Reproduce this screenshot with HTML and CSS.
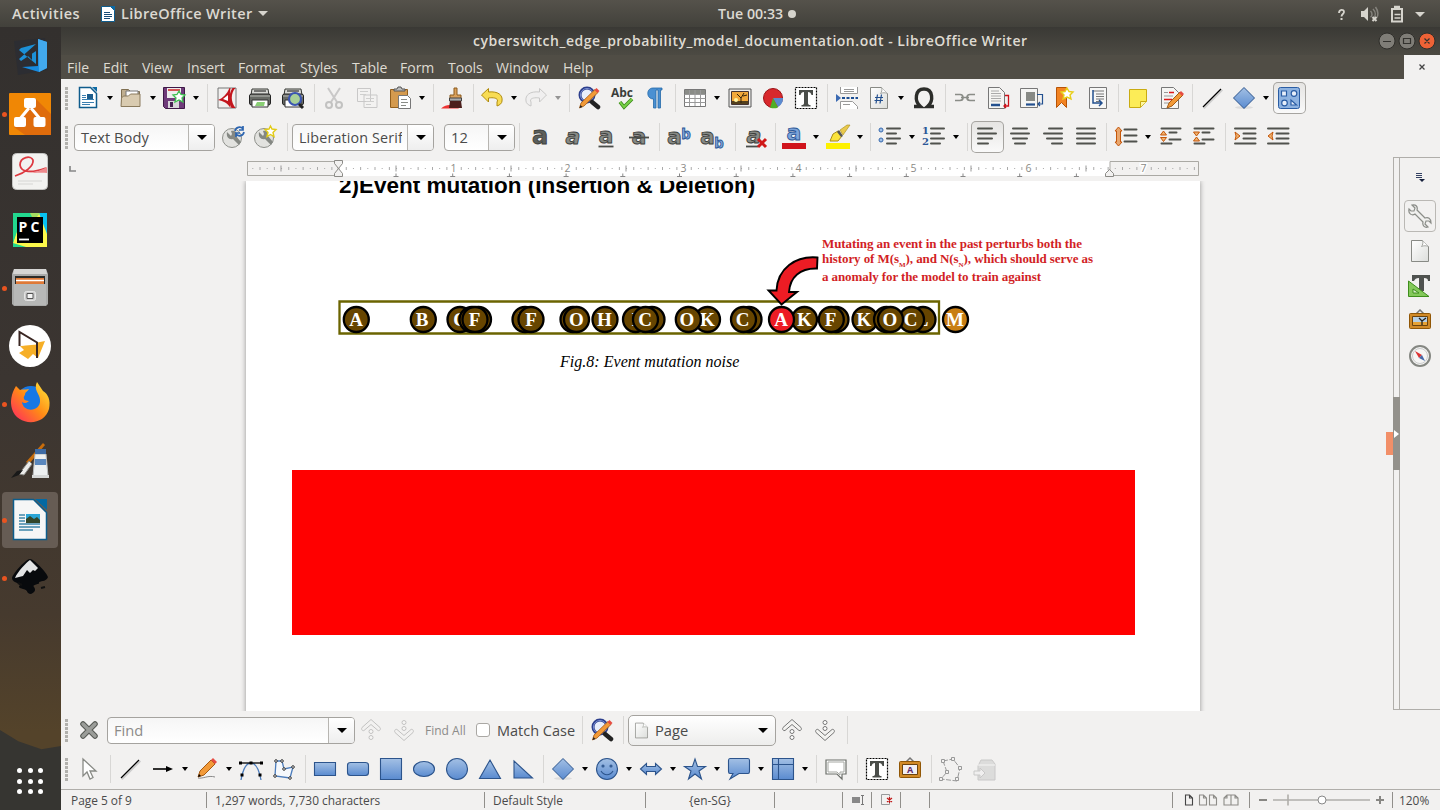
FILE: index.html
```html
<!DOCTYPE html>
<html lang="en">
<head>
<meta charset="utf-8">
<title>cyberswitch_edge_probability_model_documentation.odt - LibreOffice Writer</title>
<link rel="stylesheet" href="styles.css">
</head>
<body>
<svg class="defs" width="0" height="0">
  <defs>
    <linearGradient id="blue" x1="0" y1="0" x2="0" y2="1"><stop offset="0" stop-color="#a3c0e4"/><stop offset="1" stop-color="#5a8bd0"/></linearGradient>
    <linearGradient id="grey" x1="0" y1="0" x2="1" y2="1"><stop offset="0" stop-color="#fff"/><stop offset="1" stop-color="#dcdedb"/></linearGradient>
    <linearGradient id="fox" x1="0" y1="1" x2="1" y2="0"><stop offset="0" stop-color="#ff2166"/><stop offset=".5" stop-color="#ff8a16"/><stop offset="1" stop-color="#ffee3c"/></linearGradient>
    <symbol id="bars" viewBox="0 0 24 24"><path class="ln" d="M3 3.500H17M3 8.500H21M3 13.500H17M3 18.500H13"/></symbol>
    <symbol id="find" viewBox="0 0 24 24"><circle cx="10" cy="9" r="7" fill="#e8eefb" stroke="#2d3f8d" stroke-width="3"/><circle cx="10" cy="9" r="6.500" fill="none" stroke="#7f95d6" stroke-width="1"/><path d="M15 16l6 5" stroke="#222" stroke-width="4.500" stroke-linecap="round"/><path d="M2.500 22l1.500-5L18 3.500l3 3L7 20z" fill="#f29a38" stroke="#a45a13" stroke-width=".8"/><path d="M17.500 4l3 3 2-2-3-3z" fill="#e64c43"/><path d="M2.500 22l1-3 2 2z" fill="#222"/></symbol>
    <symbol id="line" viewBox="0 0 24 24"><path d="M4 22.500L22.500 4" stroke="#ccc" stroke-width="1.500"/><path d="M3 21L21 3" stroke="#000" stroke-width="1.300"/></symbol>
    <symbol id="diamond" viewBox="0 0 24 24"><ellipse cx="12" cy="21.500" rx="9" ry="1.500" fill="#ddd"/><path d="M12 1.500L22.500 12 12 22.500 1.500 12z" fill="url(#blue)" stroke="#2c548c"/></symbol>
    <symbol id="textbox" viewBox="0 0 24 24"><path d="M1.500 1.500h21v21h-21z" fill="#fff" stroke="#000" stroke-width="1.200" stroke-dasharray="2 1"/><path d="M5 4h14v5h-1.500c-.5-2-1.500-3-3.500-3v11c0 1.500.7 2 2.500 2v1.500h-9V19c1.800 0 2.500-.5 2.500-2V6C8 6 7 7 6.500 9H5z" fill="#4a4d49"/></symbol>
    <symbol id="page" viewBox="0 0 24 24"><path d="M3.500 1.500h11l6 6v15h-17z" fill="url(#grey)" stroke="#888a85"/><path d="M14.500 1.500c1 2 0 5-1 6 2-1 5-1 7 0" fill="#fff" stroke="#a5a7a2"/></symbol>
    <symbol id="wrench" viewBox="0 0 24 24"><circle cx="11" cy="13" r="9.500" fill="#e2e2df" stroke="#8e908b"/><path d="M6 7l4 4 1-2-1-3c5-1 6 2 5 5l5 6-2 3-6-6c-4 1-7-2-6-7z" fill="#858883"/></symbol>
    <symbol id="printer" viewBox="0 0 24 24"><path d="M4 3h16l1 6H3z" fill="#d8d9d5" stroke="#343633"/><path d="M6 5h12" stroke="#111"/><rect x="1.500" y="8" width="21" height="11" rx="2" fill="#686b66" stroke="#222"/><path d="M2 10h20" stroke="#b8bbb5"/><path d="M4 14h16v7H4z" fill="#fff" stroke="#333"/></symbol>
    <symbol id="chev-up" viewBox="0 0 24 24"><path d="M12 1.500l9 8c1 1 0 4-2 3l-7-6-7 6c-2 1-3-2-2-3z" fill="#f3f3f1" stroke="currentColor"/><circle cx="12" cy="13.500" r="2" fill="#fff" stroke="currentColor"/><circle cx="12" cy="19.500" r="2" fill="#fff" stroke="currentColor"/></symbol>
    <symbol id="chev-dn" viewBox="0 0 24 24"><path d="M12 22.500l9-8c1-1 0-4-2-3l-7 6-7-6c-2-1-3 2-2 3z" fill="#f3f3f1" stroke="currentColor"/><circle cx="12" cy="10.500" r="2" fill="#fff" stroke="currentColor"/><circle cx="12" cy="4.500" r="2" fill="#fff" stroke="currentColor"/></symbol>
    <symbol id="indent" viewBox="0 0 24 24"><path class="ln" d="M2 3.500H22.500M10.500 8.500H22.500M10.500 13.500H22.500M2 18.500H22.500"/></symbol>
  </defs>
</svg>

<header class="topbar">
  <span class="activities">Activities</span>
  <svg class="app-ico" viewBox="0 0 14 16"><path d="M.5.500h9l4 4v11H.5z" fill="#fff" stroke="#0f5c8c"/><path d="M9 0h5v5z" fill="#0b69a3"/><path d="M3 6.500h6M3 8.500h8M3 10.500h8M3 12.500h6" stroke="#174c77"/></svg>
  <span class="app-name">LibreOffice Writer</span><i class="tri"></i>
  <span class="clock">Tue 00:33</span><i class="dot"></i>
  <svg class="tray" viewBox="0 0 90 20"><g fill="none" stroke="#d6d4cd"><path d="M5 9c0-4 5-4 5-1 0 2-2.500 2-2.500 4.500" stroke-width="1.800"/><path d="M7.500 14v2" stroke-width="2"/><path d="M36.500 7c2 2 2 5 0 6M39 5c3 3 3 7 0 10M41.500 3c3 4 3 9 1 11" stroke="#85837d" stroke-width="1.500"/><path d="M38.500 13l4 4M42.500 13l-4 4" stroke-width="2"/><rect x="58" y="5" width="10" height="12.500" stroke-width="2"/><path d="M60.500 10.500h6M60.500 14h6" stroke-width="1.700"/><path d="M60 3h6" stroke-width="2.500"/></g><path d="M27 7h3l4-4v14l-4-4h-3z" fill="#d6d4cd"/><path d="M81 8h10l-5 5z" fill="#d6d4cd"/></svg>
</header>

<div class="desktop">
<nav class="dock">
  <div class="app"><svg viewBox="0 0 48 48"><path d="M8 9l31-3 3 32-30 5z" fill="#2c2d32"/><path d="M32 7l9 3v26l-8 4-17-5 16-1z" fill="#168be0"/><path d="M32 7l9 3v26l-8 4z" fill="#42a9ed"/><path d="M30 12v20L13 18l2-2zM30 12L13 27l2 2 15-10z" fill="#1c90d8"/><path d="M26 18l-5 5 5 5z" fill="#2c2d32"/></svg></div>
  <div class="app run"><svg viewBox="0 0 48 48"><rect x="3" y="3" width="42" height="42" rx="1" fill="#f08705"/><path d="M29 8l16 16v21H19L8 37z" fill="#df6c0c"/><path d="M23 18L13 30M25 18l10 12" stroke="#fff" stroke-width="3"/><rect x="18" y="8" width="12" height="10" rx="2" fill="#fff"/><rect x="8" y="27" width="12" height="10" rx="2" fill="#fff"/><rect x="27.500" y="27" width="12" height="10" rx="2" fill="#fff"/></svg></div>
  <div class="app"><svg viewBox="0 0 48 48"><rect x="6.500" y="5.500" width="35" height="36" rx="4" fill="#f2f2f0" stroke="#c5c5c3"/><path d="M9 28C19 25 28 18 27 12c-2-5-13-3-13 5 1 8 12 8 26 3" fill="none" stroke="#dd3940" stroke-width="1.800"/><path d="M20 24c8 2 15-2 21-5v6c-8-1-14 1-21-1z" fill="#ee8a8d"/><path d="M12 33h24M12 36h15" stroke="#d6d6d4"/></svg></div>
  <div class="app"><svg viewBox="0 0 48 48"><path d="M7 7h34v34H7z" fill="#22d88f"/><path d="M30 7h11v34H20L7 37l4-12z" fill="#fcf84a"/><path d="M7 37l4-12V7H7z" fill="#22d88f"/><path d="M33 7h8v21z" fill="#07c3f2"/><path d="M24 7h10l-6 8z" fill="#a3dd62"/><path d="M11 11h26v26H11z"/><text x="12.500" y="25.500" class="pc" textLength="21">PC</text><path d="M13 33.500h10" stroke="#fff" stroke-width="1.800"/></svg></div>
  <div class="app run"><svg viewBox="0 0 48 48"><path d="M8 5h32l2 5v30l-2 2H8l-2-2V10z" fill="#a9aaa9"/><path d="M8 5h32l1 5H7z" fill="#d5d5d4"/><path d="M9 12h30v8H9z" fill="#2b2b29"/><path d="M10 14h28v6H10z" fill="#df7937"/><path d="M10 16.500h28" stroke="#fff" stroke-width="1.500"/><path d="M8 20h32v21H8z" fill="#b7b8b7"/><rect x="18.500" y="27.500" width="11" height="9" rx="2" fill="#ccc" stroke="#e5e5e5"/><path d="M21 29.500h6v5h-6z" fill="#f5f5f5" stroke="#555"/></svg></div>
  <div class="app"><svg viewBox="0 0 48 48"><circle cx="24" cy="24" r="21" fill="#fff"/><path d="M14 24l25-5-7 17-5-4-5 5-9-6 5-3z" fill="#f6af27"/><path d="M13.500 23V10L31 20.500v2L14 24z" fill="#fff"/><path d="M13.500 24V10L31 20.500V36" fill="none" stroke="#3a2622" stroke-width="2"/></svg></div>
  <div class="app run"><svg viewBox="0 0 48 48"><circle cx="25" cy="21" r="15" fill="#1778e5"/><path d="M10 6c-5 8-6 16-4 23 5 17 32 18 37 0 2-9-1-15-6-18l-6-9c-4 8 3 12 3 18 1 12-17 13-18 2 2 2 5 1 7-1-6 0-6-4-4-6 0-3 2-3 4-6-4 1-7 0-9 1z" fill="url(#fox)"/></svg></div>
  <div class="app"><svg viewBox="0 0 48 48"><path d="M37 5l2 2-16 19-3-2z" fill="#c86d0c"/><path d="M23 23l3 3-8 11-5-1z" fill="#ececea" stroke="#8a8b87"/><path d="M17 32l-4 5-8 3 6-7z" fill="#191919"/><path d="M29 16h11l2 22H27z" fill="#edf0f1" stroke="#b4b7b8"/><path d="M29 11h11v5H29z" fill="#3d6ba5"/><path d="M29 21h11v6H29z" fill="#5987bd"/><path d="M26 37h17v3H26z" fill="#d5d7d7"/></svg></div>
  <div class="app run active"><svg viewBox="0 0 48 48"><path d="M7.500 3.500h20l13 13v27h-33z" fill="#f5f6f6" stroke="#0c5d8c" stroke-width="1.500"/><path d="M29 3h12v11z" fill="#0369a3"/><path d="M13 19h6M13 22h6M13 25h6M13 28h21M13 31h21M13 34h14" stroke="#3e87a9" stroke-width="1.300"/><path d="M20 18h14v9H20z" fill="#2aa5d6"/><path d="M20 27v-4l4-3 4 3 3-2 3 3v3z" fill="#33462a"/></svg></div>
  <div class="app run"><svg viewBox="0 0 48 48"><path d="M24 5c4 0 17 14 18 18-1 4-6 4-9 5 2 3-8 2-5 5 2 3 1 5-3 7-5 0-2-4-8-5-4-1-5-2-3-4-3-3-8-3-8-7C7 19 20 5 24 5z" fill="#080a0d"/><path d="M24 6l8 8-3 3-2-1-3 3-3-3-4 6-8 2c3-7 11-15 15-18z" fill="#e3e4e5"/><path d="M16 31l-4-2M35 34l4-1" stroke="#111" stroke-width="2"/></svg></div>
  <div class="grid"><i></i><i></i><i></i><i></i><i></i><i></i><i></i><i></i><i></i></div>
</nav>

<main class="window">
  <div class="titlebar"><h1>cyberswitch_edge_probability_model_documentation.odt - LibreOffice Writer</h1>
    <svg class="winbtns" viewBox="0 0 60 20"><g stroke="#2f2e2a"><circle cx="10" cy="10" r="8" fill="#7f7d77"/><circle cx="30" cy="10" r="8" fill="#7f7d77"/><circle cx="50" cy="10" r="8" fill="#ee6236"/><path d="M6 10.500h8M26.500 7.500h7v5h-7zM47.500 7.500l5 5M52.500 7.500l-5 5" fill="none" stroke="#33322e" stroke-width="1.200"/></g></svg>
  </div>
  <div class="menubar">
    <span class="m w36">File</span><span class="m w39">Edit</span><span class="m w45">View</span><span class="m w51">Insert</span><span class="m w62">Format</span><span class="m w52">Styles</span><span class="m w48">Table</span><span class="m w48">Form</span><span class="m w48">Tools</span><span class="m w67">Window</span><span class="m">Help</span>
    <span class="docclose"><svg viewBox="0 0 8 8"><path d="M1.500 1.500l5 5M6.500 1.500l-5 5" stroke="#444" stroke-width="1.300"/></svg></span>
  </div>

  <div class="toolbar"><i class="grip"></i>
    <span class="c d w43"><svg viewBox="0 0 24 24"><path d="M3.500 1.500h11l6 6v14h-17z" fill="#fff" stroke="#0f5c8c" stroke-width="1.500"/><path d="M16 1h5v5z" fill="#0b69a3"/><path d="M6 9.500h4M6 11.500h4M6 13.500h12M6 16.500h12M6 18.500h8" stroke="#3a7fb0"/><path d="M11 8h6v5h-6z" fill="#1c5d8c"/></svg></span>
    <span class="c d w43"><svg viewBox="0 0 24 24"><path d="M2.500 3.500h7l2 2h9v15h-18z" fill="#bfae8f" stroke="#7f6f51"/><path d="M7 5h12v8H7z" fill="#fff" stroke="#777"/><path d="M2.500 12l2-2h5l2-2h9.500v12.500H2z" fill="#d9cbb0" stroke="#8a7a5c"/></svg></span>
    <span class="c d w45"><svg viewBox="0 0 24 24"><path d="M1.500 1.500h21v21h-19l-2-2z" fill="#6f3b7a" stroke="#3f1947"/><path d="M5 2h14v10H5z" fill="#eee"/><path d="M6 3h12v2H6z" fill="#d75454"/><path d="M6 15h11v7H6z" fill="#d8d4da"/><path d="M8 16h3v5H8z" fill="#452050"/><path d="M17 5l2 3.500 4 .5-3 3 1 4-4-2-4 2 1-4-3-3 4-.5z" fill="#fff" stroke="#3fbf52" stroke-width="1.300"/></svg></span>
    <i class="s w8"></i>
    <span class="c w33"><svg viewBox="0 0 24 24"><path d="M3 2h18v20H3z" fill="#f1f0ef" stroke="#777"/><path d="M20.500 2c-5 5-5 14 0 20h-4c-3-6-3-14 1-20zM3 14C8 12 12 8 14.500 2h1c-1 7-1 13 0 20-3-5-7-7-12.500-8z" fill="#c3161d"/><path d="M13 9v6l-5-2z" fill="#fff"/></svg></span>
    <span class="c w33"><svg viewBox="0 0 24 24"><use href="#printer"/><path d="M7 20l2-4h8l-1 4z" fill="#89ce74"/></svg></span>
    <span class="c w33"><svg viewBox="0 0 24 24"><use href="#printer"/><circle cx="14" cy="13" r="6" fill="#a9d098" stroke="#3b56b0" stroke-width="2.200"/><path d="M18 18l4 4" stroke="#222" stroke-width="3"/></svg></span>
    <i class="s w8"></i>
    <span class="c w33 off"><svg viewBox="0 0 24 24"><path d="M6 2l9 14M18 2L9 16" stroke="#888" stroke-width="2"/><circle cx="7" cy="19" r="3" fill="none" stroke="#777" stroke-width="2"/><circle cx="17" cy="19" r="3" fill="none" stroke="#777" stroke-width="2"/></svg></span>
    <span class="c w33 off"><svg viewBox="0 0 24 24"><path d="M2.500 2.500h13v13h-13zM9 9h13v12.500H9z" fill="#f5f5f5" stroke="#888"/><path d="M5 5.500h8M5 8.500h6M11 12.500h8M11 15.500h8M11 18.500h5" stroke="#999"/></svg></span>
    <span class="c d w45"><svg viewBox="0 0 24 24"><path d="M2.500 3.500h17v18h-17z" fill="#d49a4e" stroke="#925f1d"/><path d="M6 5V3h3l1-2h3l1 2h3v2z" fill="#bbb" stroke="#555"/><path d="M10.500 9.500h9l3 3v10h-12z" fill="#fff" stroke="#777"/><path d="M13 13.500h6M13 16.500h7M13 19.500h5" stroke="#8a8c87"/></svg></span>
    <i class="s w8"></i>
    <span class="c w33"><svg viewBox="0 0 24 24"><path d="M0 22.500c6-5 9-3 14-3l4 3z" fill="#e33"/><path d="M13 2h3v7h4v4H9V9h4z" fill="#d9a05b" stroke="#8c5a1c"/><path d="M8.500 12h12v3h-12z" fill="#aaa" stroke="#444"/><path d="M9 15h11l1 7H8z" fill="#4b1f1c"/></svg></span>
    <i class="s w6"></i>
    <span class="c d w44"><svg viewBox="0 0 24 24"><path d="M1.500 9l7-6.500V6C18 5 23 9 22 15c0 2-2 4-5 5v-4c2-3-2-5-8.500-4v4z" fill="#f8dc54" stroke="#b08c10"/></svg></span>
    <span class="c d w45 off"><svg viewBox="0 0 24 24"><path d="M22.500 9l-7-6.500V6C6 5 1 9 2 15c0 2 2 4 5 5v-4c-2-3 2-5 8.500-4v4z" fill="#eee" stroke="#888"/></svg></span>
    <i class="s w8"></i>
    <span class="c w33"><svg><use href="#find"/></svg></span>
    <span class="c w33"><svg viewBox="0 0 24 24"><text x="1" y="10.500" class="abc" textLength="22" lengthAdjust="spacingAndGlyphs">Abc</text><path d="M10 16l4 5 8-8" fill="none" stroke="#3d8b1c" stroke-width="3.600"/><path d="M10 16l4 5 8-8" fill="none" stroke="#77cf46" stroke-width="2"/></svg></span>
    <span class="c w33"><svg viewBox="0 0 24 24"><path d="M10 2h9v2h-1.500v18H15V4h-2v18h-2.500V13C3 13 3 2 10 2z" fill="#4a90d2" stroke="#256aa8" stroke-width=".8"/></svg></span>
    <i class="s w7"></i>
    <span class="c d w45"><svg viewBox="0 0 24 24"><path d="M1.500 3.500h21v17h-21z" fill="#fff" stroke="#777"/><path d="M2 4h20v4H2z" fill="#8a8c87"/><path d="M1.500 8.500h21M1.500 12.500h21M1.500 16.500h21M6.500 4v16M12 4v16M17.500 4v16" stroke="#999"/></svg></span>
    <span class="c w33"><svg viewBox="0 0 24 24"><path d="M1 3h22v18H1z" fill="#eeeeec" stroke="#555"/><path d="M3.500 5.500h17v13h-17z" fill="#f1a83b" stroke="#433"/><path d="M4 15h16v3H4z" fill="#54401c"/><path d="M13 17v-5l-4-4m4 4l3-5m-1 3l4-1" stroke="#30200a" fill="none" stroke-width="1"/><circle cx="8" cy="14" r="2" fill="#fff3a0"/></svg></span>
    <span class="c w33"><svg viewBox="0 0 24 24"><circle cx="12" cy="12" r="9.500" fill="#d8282c" stroke="#9c1116"/><path d="M12 12h10a10 10 0 0 1-5 9z" fill="#5b8bd0"/><path d="M12 12l5 9.500a10 10 0 0 1-8 0z" fill="#4fae26"/></svg></span>
    <span class="c w33"><svg><use href="#textbox"/></svg></span>
    <i class="s w8"></i>
    <span class="c w32"><svg viewBox="0 0 24 24"><path d="M5.500 1v6.500h17V1M5.500 23v-7.500h12l5 5V23" fill="#fff" stroke="#999"/><path d="M9 3.500h10M9 5.500h10M8 18.500h7" stroke="#999"/><path d="M1 8l5 4-5 4z" fill="#3b6ab2"/><path d="M7 12h16" stroke="#1d4f93" stroke-width="2" stroke-dasharray="3 1.500"/></svg></span>
    <span class="c d w45"><svg viewBox="0 0 24 24"><use href="#page"/><path d="M10.500 8.500l-1.500 9M14.500 8.500L13 17.500M8 11.500H16M7.500 14.500h8.500" stroke="#23508f" stroke-width="1.200"/></svg></span>
    <span class="c w33"><svg viewBox="0 0 24 24"><path d="M2 20.500h6.500C2 15 3 3 12 3s10 12 3.500 17.500H22" fill="none" stroke="#2c2d2a" stroke-width="3.400"/></svg></span>
    <i class="s w8"></i>
    <span class="c w33"><svg viewBox="0 0 24 24"><path d="M2 8.500h5c4 0 4 6 0 6H2M22 8.500h-5c-4 0-4 6 0 6h5M8 11.500h8" fill="none" stroke="#8a8d87" stroke-width="1.700"/></svg></span>
    <span class="c w33"><svg viewBox="0 0 24 24"><path d="M2.500 1.500h11l5 5v16h-16z" fill="#f5f5f3" stroke="#777"/><path d="M5 5h8M5 7.500h10M5 10h10M5 12.500h10M5 15h10" stroke="#aaa"/><path d="M5 19h9" stroke="#23508f" stroke-width="2.500"/><path d="M19 9.500h3.500V20H18m2-2l-2 2 2 2" fill="none" stroke="#cc1018" stroke-width="1.300"/></svg></span>
    <span class="c w34"><svg viewBox="0 0 24 24"><path d="M1.500 2.500h17v19h-17z" fill="#f5f5f3" stroke="#777"/><path d="M7 6h9v9H7z" fill="#888a85"/><path d="M7 18.500h9" stroke="#23508f" stroke-width="2.200"/><path d="M18 8.500h5.500V18H19m2-2l-2 2 2 2" fill="none" stroke="#23508f" stroke-width="1.200"/></svg></span>
    <span class="c w33"><svg viewBox="0 0 24 24"><path d="M3.500 1.500h10v20l-5-5-5 5z" fill="#f28322" stroke="#b75306"/><path d="M14 2l2 3.500 4 .5-3 3 1 4-4-2-4 2 1-4-3-3 4-.5z" fill="#fff" stroke="#e7cd16" stroke-width="1.400"/></svg></span>
    <span class="c w32"><svg viewBox="0 0 24 24"><path d="M3.500 1.500h17v21h-17z" fill="#f7f7f6" stroke="#777"/><path d="M7 5h11M10 8h8M10 10.500h8M10 13h8M10 15.500h4" stroke="#777"/><path d="M7 4v13h8m-2-3l3 3-3 3" fill="none" stroke="#23508f" stroke-width="1.500"/></svg></span>
    <i class="s w8"></i>
    <span class="c w34"><svg viewBox="0 0 24 24"><path d="M3.500 3.500h17v12l-6 6h-11z" fill="#fcec57" stroke="#c9ab11"/><path d="M14.500 21v-5.500h6" fill="#fdf7a5" stroke="#c9ab11"/></svg></span>
    <span class="c w32"><svg viewBox="0 0 24 24"><path d="M1.500 1.500h12l5 5v16h-17z" fill="#f5f5f3" stroke="#777"/><path d="M4 6.500h4M4 10h9M4 17h6" stroke="#999"/><path d="M9 6.500h5M4 13.500h8" stroke="#dd1a1a" stroke-width="1.500"/><path d="M7 22l2-5L20 6l3 3L12 20z" fill="#f29a38" stroke="#a45a13"/><path d="M19 7l3 3 2-2-3-3z" fill="#e64c43"/></svg></span>
    <i class="s w8"></i>
    <span class="c w32"><svg><use href="#line"/></svg></span>
    <span class="c d w45"><svg><use href="#diamond"/></svg></span>
    <span class="c w33 on"><svg viewBox="0 0 24 24"><rect x="1.500" y="1.500" width="21" height="21" rx="2" fill="#8db2e0" stroke="#2a5da4"/><g fill="#e7effa" stroke="#2a5da4" stroke-width="1.200"><path d="M4.500 5h5v5h-5zM14 14v5h5.500z"/><circle cx="17" cy="7.500" r="2.800"/><circle cx="7.500" cy="17" r="2.800"/></g></svg></span>
  </div>

  <div class="toolbar"><i class="grip"></i>
    <span class="combo w141 ml2"><span>Text Body</span><b></b></span>
    <span class="c w32 ml2"><svg viewBox="0 0 24 24"><use href="#wrench"/><path d="M14 6a4.500 4.500 0 0 1 8-2m0-3v4h-4M23 7a4.500 4.500 0 0 1-8 2m0 3V8h4" fill="none" stroke="#2d65b0" stroke-width="1.700"/></svg></span>
    <span class="c w33"><svg viewBox="0 0 24 24"><use href="#wrench"/><path d="M17.500 1l1.500 3 4 .5-3 3 1 4-3.500-2-3.500 2 1-4-3-3 4-.5z" fill="#fff" stroke="#e2cb15" stroke-width="1.400"/></svg></span>
    <i class="s w10"></i>
    <span class="combo w142"><span class="name">Liberation Serif</span><b></b></span>
    <span class="combo w71 ml10"><span>12</span><b></b></span>
    <i class="s w9"></i>
    <span class="c w33"><svg viewBox="0 0 24 24"><text x="12" y="18.500" class="ga fat">a</text></svg></span>
    <span class="c w33"><svg viewBox="0 0 24 24"><text x="12" y="18.500" class="ga it">a</text></svg></span>
    <span class="c w33"><svg viewBox="0 0 24 24"><text x="12" y="18" class="ga">a</text><path d="M4.500 21.500h15" stroke="#4a4d49" stroke-width="1.800"/></svg></span>
    <span class="c w33"><svg viewBox="0 0 24 24"><text x="12" y="18.500" class="ga">a</text><path d="M2 12.500h20" stroke="#4a4d49" stroke-width="1.800"/></svg></span>
    <i class="s w7"></i>
    <span class="c w33"><svg viewBox="0 0 24 24"><text x="7.500" y="18.500" class="ga">a</text><text x="19" y="14" class="gb">b</text></svg></span>
    <span class="c w34"><svg viewBox="0 0 24 24"><text x="7.500" y="18.500" class="ga">a</text><text x="19" y="22.500" class="gb">b</text></svg></span>
    <i class="s w10"></i>
    <span class="c w32"><svg viewBox="0 0 24 24"><text x="10" y="18" class="ga it">a</text><path d="M2 21.500h12" stroke="#4a4d49" stroke-width="1.800"/><path d="M14 14l8 8M22 14l-8 8" stroke="#d01818" stroke-width="3"/></svg></span>
    <i class="s w6"></i>
    <span class="c d w44"><svg viewBox="0 0 24 24"><text x="12" y="15" class="ga bl">a</text><path d="M0 18h24v6H0z" fill="#d0141c"/></svg></span>
    <span class="c d w45"><svg viewBox="0 0 24 24"><path d="M4 16l3-7 5-3 4 5-4 5z" fill="#fbe43c" stroke="#a88d17"/><path d="M11 7l4 5 2-1-4-6z" fill="#555"/><path d="M14 5l7-5h3l-7 10z" fill="#e9c94d" stroke="#a88d17" stroke-width=".6"/><path d="M0 18h24v6H0z" fill="#fdf100"/></svg></span>
    <i class="s w7"></i>
    <span class="c d w44"><svg viewBox="0 0 24 24"><circle cx="3" cy="5" r="2" fill="#9fbfe7" stroke="#3668ad"/><circle cx="3" cy="15" r="2" fill="#9fbfe7" stroke="#3668ad"/><path d="M9 3.500h13M9 8.500h9M9 13.500h13M9 18.500h9" class="ln"/></svg></span>
    <span class="c d w45"><svg viewBox="0 0 24 24"><text x="3.500" y="9" class="num">1</text><text x="3.500" y="20" class="num">2</text><path d="M9 3.500h13M9 8.500h9M9 13.500h13M9 18.500h9" class="ln"/></svg></span>
    <i class="s w8"></i>
    <span class="c w33 on"><svg><use href="#bars"/></svg></span>
    <span class="c w33"><svg viewBox="0 0 24 24"><path d="M5 3.500h14M3 8.500h18M5 13.500h14M7 18.500h10" class="ln"/></svg></span>
    <span class="c w33"><svg viewBox="0 0 24 24"><path d="M8 3.500h13M3 8.500h18M6 13.500h15M11 18.500h10" class="ln"/></svg></span>
    <span class="c w33"><svg viewBox="0 0 24 24"><path d="M3 3.500h18M3 8.500h18M3 13.500h18M3 18.500h18" class="ln"/></svg></span>
    <i class="s w7"></i>
    <span class="c d w45"><svg viewBox="0 0 24 24"><path d="M4.500 2l3.500 4H6.500v11H8l-3.500 4L1 17h1.500V6H1z" fill="#e9a66d" stroke="#c4560a"/><path d="M10.500 4.500h12M10.500 10.500h12M10.500 16.500h12" class="ln"/></svg></span>
    <span class="c w33"><svg viewBox="0 0 24 24"><path d="M2.500 3.500h19M10.500 7.500h7M10.500 14.500h11M2.500 18.500h10" class="ln"/><path d="M1.500 10h6L4.500 6zM1.500 12.500h6l-3 4z" fill="#f1b26c" stroke="#c4560a"/></svg></span>
    <span class="c w33"><svg viewBox="0 0 24 24"><path d="M2.500 3.500h19M10.500 7.500h7M10.500 14.500h11M2.500 18.500h10" class="ln"/><path d="M1.500 7h6l-3 4zM1.500 16h6l-3-4z" fill="#f1b26c" stroke="#c4560a"/></svg></span>
    <i class="s w8"></i>
    <span class="c w33"><svg viewBox="0 0 24 24"><use href="#indent"/><path d="M2 7l5 4-5 4 1-4z" fill="#f1b26c" stroke="#c4560a"/></svg></span>
    <span class="c w33"><svg viewBox="0 0 24 24"><use href="#indent"/><path d="M7 7l-5 4 5 4-1-4z" fill="#f1b26c" stroke="#c4560a"/></svg></span>
  </div>

  <div class="workspace">
    <section class="editor">
      <svg class="ruler" viewBox="61 157 1332 24">
        <path d="M338 161h772v15H338z" fill="#fff"/>
        <path d="M247.500 161.500H338v14H247.500zM1110 161.500h88.500v14H1110z" fill="#f2f1f0" stroke="#aaa9a4"/>
        <path d="M252.300 168.500H1196" stroke="#aaa" stroke-dasharray="1 13.375"/>
        <path d="M259.500 168.500H1196" stroke="#aaa" stroke-dasharray="1 13.375" stroke-width="3"/>
        <path d="M280.500 168.500H1100" stroke="#999" stroke-dasharray="1 114" stroke-width="6"/>
        <g class="rnum"><text x="453.500" y="172">1</text><text x="567.500" y="172">2</text><text x="683.500" y="172">3</text><text x="798.500" y="172">4</text><text x="913.500" y="172">5</text><text x="1028.500" y="172">6</text><text x="1143.500" y="172">7</text></g>
        <path d="M395.500 175h690" stroke="#888" stroke-dasharray="1 55.700" stroke-width="3"/><path d="M393.500 176.500h690" stroke="#888" stroke-dasharray="5 51.700"/>
        <g fill="#f2f1f0" stroke="#8b8a86"><path d="M334.500 160.500h8v3l-4 5-4-5zM334.500 176.500h8v-3l-4-5-4 5zM1105.500 176.500h8v-3l-4-4-4 4z"/></g>
        <path d="M70 166v5H76" fill="none" stroke="#888" stroke-width="1.700"/>
      </svg>
      <div class="canvas">
        <article class="sheet">
          <h2>2)Event mutation (Insertion &amp; Deletion)</h2>
          <svg class="figure" viewBox="330 230 780 120">
            <path d="M339.500 301.500h599.500v32H339.500z" fill="#fff" stroke="#6b6400" stroke-width="2.300"/>
            <g class="ev">
              <g><circle cx="356.300" cy="319.500" r="12.500"/><text x="356" y="326">A</text></g>
              <g><circle cx="423.300" cy="319.500" r="12.500"/><text x="422" y="326">B</text></g>
              <g><circle cx="460" cy="319.500" r="12.500"/><text x="460" y="326">C</text></g>
              <circle cx="472" cy="319.500" r="12.500"/><circle cx="478.500" cy="319.500" r="12.500"/>
              <g><circle cx="475" cy="319.500" r="12.500"/><text x="474.500" y="326">F</text></g>
              <g><circle cx="525" cy="319.500" r="12.500"/><text x="526" y="326">K</text></g>
              <g><circle cx="531" cy="319.500" r="12.500"/><text x="531" y="326">F</text></g>
              <circle cx="573" cy="319.500" r="12.500"/>
              <g><circle cx="576.500" cy="319.500" r="12.500"/><text x="576.500" y="326">O</text></g>
              <g><circle cx="605" cy="319.500" r="12.500"/><text x="604.500" y="326">H</text></g>
              <g><circle cx="635.500" cy="319.500" r="12.500"/><text x="638" y="326">B</text></g>
              <circle cx="652" cy="319.500" r="12.500"/>
              <g><circle cx="645.500" cy="319.500" r="12.500"/><text x="645" y="326">C</text></g>
              <g><circle cx="707.500" cy="319.500" r="12.500"/><text x="707.500" y="326">K</text></g>
              <g><circle cx="688.300" cy="319.500" r="12.500"/><text x="687" y="326">O</text></g>
              <circle cx="749" cy="319.500" r="12.500"/>
              <g><circle cx="743.500" cy="319.500" r="12.500"/><text x="742.500" y="326">C</text></g>
              <g><circle cx="804.500" cy="319.500" r="12.500"/><text x="804.500" y="326">K</text></g>
              <circle cx="836" cy="319.500" r="12.500"/>
              <g><circle cx="831.300" cy="319.500" r="12.500"/><text x="830.500" y="326">F</text></g>
              <g><circle cx="865" cy="319.500" r="12.500"/><text x="864" y="326">K</text></g>
              <g><circle cx="923" cy="319.500" r="12.500"/><text x="922" y="326">L</text></g>
              <g><circle cx="911.500" cy="319.500" r="12.500"/><text x="910.500" y="326">C</text></g>
              <circle cx="886.500" cy="319.500" r="12.500"/>
              <g><circle cx="890.500" cy="319.500" r="12.500"/><text x="890" y="326">O</text></g>
              <g class="hot"><circle cx="781.500" cy="319.500" r="12.500"/><text x="781" y="326">A</text></g>
              <g class="amber"><circle cx="955.500" cy="319.500" r="12.500"/><text x="955" y="326">M</text></g>
            </g>
            <path d="M817.500 257.500c-22-2-40 11-41 33h-8l13 14 15.500-12.500h-8c1-15 11-24 28-23.500z" fill="#ed1c24" stroke="#000" stroke-width="1.900"/>
            <g class="note"><text x="822" y="248" textLength="260">Mutating an event in the past perturbs both the</text><text x="822" y="263" textLength="271">history of M(s<tspan class="sub" dy="4">M</tspan><tspan dy="-4">), and N(s</tspan><tspan class="sub" dy="4">N</tspan><tspan dy="-4">), which should serve as</tspan></text><text x="822" y="281" textLength="219">a anomaly for the model to train against</text></g>
          </svg>
          <p class="caption">Fig.8: Event mutation noise</p>
          <div class="block"></div>
        </article>
      </div>
    </section>
    <div class="splitter"><i class="mark"></i><i class="thumb"></i></div>
    <aside class="sidebar">
      <svg class="sm" viewBox="0 0 24 24"><path d="M8 8.500h6M8 10.500h6M8 12.500h6" stroke="#354263"/><path d="M11 14h6l-3 3z" fill="#16213c"/></svg>
      <span class="tab sel"><svg viewBox="0 0 24 24"><path d="M4 1l3 3-1 3-3 0-2-2c-1 5 3 7 6 5l8 8c-1 4 2 6 5 5l-3-3 1-3h3l2 2c0-5-3-6-6-5L9 6c1-3-1-6-5-5z" fill="#f0f0ee" stroke="#8b8d88" stroke-width="1.200"/></svg></span>
      <span class="tab"><svg><use href="#page"/></svg></span>
      <span class="tab"><svg viewBox="0 0 24 24"><path d="M4 1h18v6h-2c0-2-1-3-4-3v13h-5V4C8 4 7 5 6 7H4z" fill="#4f524f"/><path d="M.5 7v15.500H21z" fill="#84c95b" stroke="#3e8e1c"/><path d="M5 15v4h6z" fill="#dbeed1" stroke="#3e8e1c"/></svg></span>
      <span class="tab"><svg viewBox="0 0 24 24"><path d="M8 5l4-4 4 4" fill="none" stroke="#777" stroke-width="1.500"/><rect x="1.500" y="4.500" width="21" height="15" rx="1" fill="#d18a27" stroke="#915706"/><path d="M4.500 7.500h15v9h-15z" fill="#b6cfe4" stroke="#6b430e"/><path d="M5 13h14v3H5z" fill="#e6a235"/><path d="M14 16v-4l-3-3m3 3l4-3" stroke="#222" fill="none" stroke-width="1.300"/></svg></span>
      <span class="tab"><svg viewBox="0 0 24 24"><circle cx="12" cy="12" r="10" fill="#f6f6f5" stroke="#858782" stroke-width="2"/><circle cx="12" cy="12" r="7.500" fill="none" stroke="#ccc"/><path d="M7 7l7 4-3 3z" fill="#dc3333"/><path d="M17 17l-6-3 3-3z" fill="#4769a9"/></svg></span>
    </aside>
  </div>

  <div class="toolbar low"><i class="grip"></i>
    <span class="c w34"><svg viewBox="0 0 24 24"><path d="M6 6l12 12M18 6L6 18" stroke="#555853" stroke-width="5.500" stroke-linecap="round"/><path d="M6 6l12 12M18 6L6 18" stroke="#9b9d99" stroke-width="3.500" stroke-linecap="round"/></svg></span>
    <span class="combo find w248"><span>Find</span><b></b></span>
    <span class="c w33 off"><svg class="nav"><use href="#chev-up"/></svg></span>
    <span class="c w37 off"><svg class="nav"><use href="#chev-dn"/></svg></span>
    <span class="findall w51">Find All</span><i class="check"></i><span class="match w82">Match Case</span>
    <i class="s w7"></i>
    <span class="c w32"><svg><use href="#find"/></svg></span>
    <i class="s w10"></i>
    <span class="select w148"><svg><use href="#page"/></svg><span>Page</span><b></b></span>
    <span class="c w33"><svg class="nav"><use href="#chev-up"/></svg></span>
    <span class="c w33"><svg class="nav"><use href="#chev-dn"/></svg></span>
    <i class="s w10"></i>
  </div>

  <div class="toolbar low"><i class="grip"></i>
    <span class="c w33"><svg viewBox="0 0 24 24"><path d="M6 2v17l4-4 3 7 3-1.500-3-6.500h6z" fill="#fff" stroke="#888a85" stroke-width="1.300"/></svg></span>
    <i class="s w8"></i>
    <span class="c w33"><svg><use href="#line"/></svg></span>
    <span class="c d w44"><svg viewBox="0 0 24 24"><path d="M2 12h16" stroke="#000" stroke-width="1.600"/><path d="M15 9l7 3-7 3z"/></svg></span>
    <span class="c d w44"><svg viewBox="0 0 24 24"><path d="M3 21c5 1 10-3 17-1" fill="none" stroke="#888"/><path d="M3 20l2-6L16 3l4 4L9 18z" fill="#f29a38" stroke="#a45a13"/><path d="M16 3l4 4 2-2-4-4z" fill="#e64c43"/><path d="M3 20l1-3 2 2z"/></svg></span>
    <span class="c w33"><svg viewBox="0 0 24 24"><path d="M2 23C4 12 7 6 12 6s8 6 10 17" fill="none" stroke="#4b7cbc" stroke-width="1.300"/><path d="M1 6h22" stroke="#000" stroke-width="1.300"/><path d="M0 4.500h3v3H0zM10.500 4.500h3v3h-3zM21 4.500h3v3h-3zM1.500 16.500h3v3h-3zM19.500 16.500h3v3h-3z"/></svg></span>
    <span class="c w33"><svg viewBox="0 0 24 24"><path d="M4 4h6l2 8 9-2-3 11-15-2z" fill="#f5f8fc" stroke="#4b7cbc" stroke-width="1.300"/><g fill="#fff" stroke="#333"><circle cx="4" cy="4" r="1.300"/><circle cx="10" cy="4" r="1.300"/><circle cx="12" cy="12" r="1.300"/><circle cx="21" cy="10" r="1.300"/><circle cx="18" cy="21" r="1.300"/><circle cx="3" cy="19" r="1.300"/></g></svg></span>
    <i class="s w8"></i>
    <span class="c w33"><svg class="sh" viewBox="0 0 24 24"><path d="M1.500 5.500h21v13h-21z"/></svg></span>
    <span class="c w33"><svg class="sh" viewBox="0 0 24 24"><rect x="1.500" y="5.500" width="21" height="13" rx="3"/></svg></span>
    <span class="c w33"><svg class="sh" viewBox="0 0 24 24"><path d="M1.500 1.500h21v21h-21z"/></svg></span>
    <span class="c w33"><svg class="sh" viewBox="0 0 24 24"><ellipse cx="12" cy="12" rx="10.500" ry="7.500"/></svg></span>
    <span class="c w33"><svg class="sh" viewBox="0 0 24 24"><circle cx="12" cy="12" r="10.500"/></svg></span>
    <span class="c w33"><svg class="sh" viewBox="0 0 24 24"><path d="M12 3l10.500 18.500h-21z"/></svg></span>
    <span class="c w33"><svg class="sh" viewBox="0 0 24 24"><path d="M3 4l18.500 17H3z"/></svg></span>
    <i class="s w7"></i>
    <span class="c d w44"><svg><use href="#diamond"/></svg></span>
    <span class="c d w44"><svg class="sh" viewBox="0 0 24 24"><circle cx="12" cy="12" r="10.500"/><path class="smile" d="M6 14c3 5 9 5 12 0"/><circle cx="8" cy="9" r="1"/><circle cx="16" cy="9" r="1"/></svg></span>
    <span class="c d w44"><svg class="sh" viewBox="0 0 24 24"><path d="M1.500 12l6-5.500v3h9v-3l6 5.500-6 5.500v-3h-9v3z"/></svg></span>
    <span class="c d w44"><svg class="sh" viewBox="0 0 24 24"><path d="M12 2l2.500 7.500h8L16 14l2.500 8-6.500-5-6.500 5L8 14 1.500 9.500h8z"/></svg></span>
    <span class="c d w44"><svg class="sh" viewBox="0 0 24 24"><path d="M3 1.500h18q1.500 0 1.500 2v11q0 2-1.500 2H12L3 22l3-5.500H3q-1.500 0-1.500-2v-11q0-2 1.500-2z"/></svg></span>
    <span class="c d w45"><svg class="sh" viewBox="0 0 24 24"><path d="M1.500 1.500h21v21h-21zM7.500 1.500v21M1.500 7.500h21"/></svg></span>
    <i class="s w8"></i>
    <span class="c w33"><svg viewBox="0 0 24 24"><path d="M2 3h20v14h-4v5l-5-5H2z" fill="#fff" stroke="#6b6e69" stroke-width="1.200"/><path d="M4 5h16v10h-4v3l-3-3H4z" fill="none" stroke="#a5a7a2"/></svg></span>
    <i class="s w8"></i>
    <span class="c w33"><svg><use href="#textbox"/></svg></span>
    <span class="c w33"><svg viewBox="0 0 24 24"><path d="M8 5l4-4 4 4" fill="none" stroke="#777" stroke-width="1.500"/><rect x="1.500" y="4.500" width="21" height="16" rx="1" fill="#d18a27" stroke="#915706"/><path d="M4.500 7.500h15v10h-15z" fill="#f2eff3" stroke="#6b430e"/><text x="12" y="16" class="fa">A</text></svg></span>
    <i class="s w8"></i>
    <span class="c w34"><svg viewBox="0 0 24 24"><path d="M4 4l10-2 7 9-3 13M4 4l4 11-6 7 16 2" fill="none" stroke="#999" stroke-dasharray="5 1.500"/><g fill="#f2f1f0" stroke="#999"><path d="M2.500 2.500h3v3h-3zM12.500.500h3v3h-3zM19.500 9.500h3v3h-3zM6.500 13.500h3v3h-3zM.5 20.500h3v3h-3zM16.500 20.500h3v3h-3z"/></g></svg></span>
    <span class="c w33 off"><svg viewBox="0 0 24 24"><path d="M5 9l3-6h11l3 4v16H5z" fill="#bbb" stroke="#888"/><path d="M5 8h17" stroke="#fff"/><path d="M1 14h6v-3l5 5-5 5v-3H1z" fill="#eee" stroke="#888"/></svg></span>
  </div>

  <footer class="status">
    <span class="st w146 first">Page 5 of 9</span><span class="st w278">1,297 words, 7,730 characters</span><span class="st w161">Default Style</span><span class="st w129 mid">{en-SG}</span><span class="st w68"></span>
    <span class="st w29"><svg viewBox="0 0 14 12"><path d="M1 3h8v6H1z" fill="#888"/><path d="M10 1.500h3M11.500 1.500v9M10 10.500h3" stroke="#777"/></svg></span>
    <span class="st w29"><svg viewBox="0 0 14 12"><path d="M9.500 2.500V.500h-8v10h8V8" fill="none" stroke="#999"/><path d="M7 4l5 4M12 4l-5 4M9.500 3v6" stroke="#c01818" stroke-width="1.200"/></svg></span>
    <span class="st w29"></span><span class="st w243"></span>
    <span class="st w77"><svg class="views" viewBox="0 0 58 12"><g fill="none" stroke="#8d8c88" stroke-width="1.100"><path d="M4.500 1h4l3 3v7h-7zM8.500 1v3h3" stroke="#444"/><path d="M18.500 1h4l3 3v7h-7zM22.500 1v3h3M28.500 1h4l3 3v7h-7zM32.500 1v3h3M43 4l3-3h4v10h-7zM50 1h4l3 3v7h-7M43 4h3V1M57 4h-3V1"/></g></svg></span>
    <span class="st w143"><svg class="zoom" viewBox="0 0 130 14"><path d="M1 7h8M118 7h8M122 3v8" stroke="#888783" stroke-width="2"/><path d="M15 7h97M30 1.500v11" stroke="#b0aeaa" stroke-width="1.600"/><circle cx="64" cy="7" r="4" fill="#fff" stroke="#888"/></svg></span>
    <span class="st last">120%</span>
  </footer>
</main>
</div>
</body>
</html>
```
FILE: styles.css
```css
* { box-sizing: border-box; }
body { margin: 0; width: 1440px; height: 810px; overflow: hidden; display: flex; flex-direction: column; font: 14px "Open Sans", sans-serif; color: #4a4a4a; background: #f2f1f0; }
.defs { position: absolute; }
i { font-style: normal; }

/* Desktop top bar */
.topbar { flex: none; height: 27px; display: flex; align-items: center; background: linear-gradient(#55524b, #42413b); color: #dcd9d2; font-weight: 600; font-size: 14px; white-space: nowrap; }
.activities { width: 89px; padding-left: 12px; font-size: 14.500px; letter-spacing: .45px; }
.app-ico { width: 14px; height: 16px; margin: 0 6px 0 12px; }
.app-name { width: 133px; font-size: 14.500px; letter-spacing: .35px; }
.tri { border: 5px solid transparent; border-top-color: #d6d4cd; border-bottom: 0; margin-left: 4px; }
.clock { width: 67px; margin-left: 450px; font-size: 14.200px; }
.dot { width: 8px; height: 8px; border-radius: 4px; background: #d6d4cd; margin-left: 3px; }
.tray { width: 90px; height: 20px; margin-left: auto; margin-right: 16px; overflow: visible; }

.desktop { display: flex; height: 783px; }

/* Launcher */
.dock { width: 61px; flex: none; display: flex; flex-direction: column; background: linear-gradient(#33302e, #3b3531 45%, #463a2e 75%, #54432a 90%); position: relative; }
.dock::after { content: ""; position: absolute; left: 0; right: 0; bottom: 0; height: 80px; background: #363531; clip-path: polygon(0 0, 30% 14%, 68% 24%, 100% 20%, 100% 100%, 0 100%); }
.app { height: 58px; display: flex; align-items: center; justify-content: center; position: relative; padding-right: 1px; }
.app svg { width: 48px; height: 48px; }
.run::before { content: ""; position: absolute; left: 2px; top: 27px; width: 5px; height: 5px; border-radius: 50%; background: #e95420; }
.active { background: #665c54; border-radius: 4px; margin: 1px 3px 1px 2px; height: 56px; padding: 0; }
.active::before { left: 0; top: 26px; }
.grid { margin: auto 0 16px 17px; width: 27px; display: grid; grid-template-columns: repeat(3, 5px); gap: 5.500px; position: relative; z-index: 1; }
.grid i { width: 5px; height: 5px; border-radius: 50%; background: #fff; }
.pc { font: bold 14px "Open Sans", sans-serif; fill: #fff; }

/* Application window */
.window { flex: 1; min-width: 0; display: flex; flex-direction: column; }
.titlebar { height: 28px; flex: none; display: flex; align-items: center; background: linear-gradient(#3a3935, #4c4a43); }
h1 { margin: 0 0 0 412px; width: 560px; font-size: 14px; line-height: 28px; font-weight: 600; letter-spacing: .52px; color: #dfdbd2; white-space: nowrap; }
.winbtns { width: 60px; height: 20px; margin-left: auto; margin-right: 3px; }
.menubar { height: 24px; flex: none; display: flex; align-items: center; background: #504d45; color: #dfdbd2; padding-left: 6px; font-size: 14px; }
.docclose { margin-left: auto; width: 36px; height: 24px; background: #f2f1f0; display: flex; align-items: center; justify-content: center; }
.docclose svg { width: 8px; height: 8px; }

.toolbar { height: 39px; flex: none; display: flex; align-items: center; padding: 0 0 1px 4px; white-space: nowrap; }
.toolbar > * { flex: none; }
.grip { width: 3px; height: 23px; margin-right: 4px; background: repeating-linear-gradient(#b1b0ac 0 3px, transparent 3px 4px); }
.low .grip { margin-right: 5px; }
.c { height: 32px; display: flex; align-items: center; padding-left: 4px; }
.c svg { width: 24px; height: 24px; flex: none; overflow: visible; }
.d::after { content: ""; border: 3px solid transparent; border-top: 4px solid #000; border-bottom: 0; margin-left: 7px; }
.off { opacity: .38; }
.on { border-radius: 5px; background: linear-gradient(#e5e4e2, #fafafa); box-shadow: inset 0 0 0 1px #a6a4a0; }
.s { height: 28px; background: linear-gradient(#d8d7d5, #d8d7d5) 50% 0 / 1px 100% no-repeat; }
.ln { stroke: #50524d; stroke-width: 2; stroke-linecap: round; }
.ga { font: bold 22px "DejaVu Sans", sans-serif; fill: #878a85; stroke: #3d403c; stroke-width: .9; text-anchor: middle; }
.fat { font-size: 24px; fill: #5c5f5b; }
.it { font-style: italic; }
.bl { fill: #7da4da; stroke: #2b5796; }
.gb { font: bold 15px "Open Sans", sans-serif; fill: #86abdf; stroke: #2b5796; stroke-width: .9; text-anchor: middle; }
.num { font: bold 10px "DejaVu Serif", serif; fill: #2b5796; text-anchor: middle; }
.abc { font: bold 13px "Open Sans", sans-serif; fill: #3a3d3a; }
.fa { font: bold 9px "Open Sans", sans-serif; fill: #5c2a66; text-anchor: middle; }
.sh * { fill: url(#blue); stroke: #2c548c; stroke-width: 1.100; }
.sh .smile { fill: none; }
.nav { color: #777; }

.combo { height: 27px; display: flex; border: 1px solid #a5a39f; border-radius: 4px; background: linear-gradient(#f6f6f6, #fff); overflow: hidden; }
.combo span { flex: 1; padding-left: 6px; line-height: 25px; overflow: hidden; font-size: 14.700px; }
.combo .name { font-size: 14.300px; letter-spacing: .15px; margin-right: 5px; }
.combo b { width: 26px; border-left: 1px solid #b7b5b1; background: linear-gradient(#fff, #eee); display: flex; align-items: center; justify-content: center; }
.combo b::after, .select b { content: ""; border: 5px solid transparent; border-top-color: #000; border-bottom: 0; }
.find span { color: #8c8b89; }
.findall { font-size: 12px; color: #8c8b89; }
.check { width: 14px; height: 14px; border: 1px solid #aaa8a4; border-radius: 3px; background: #fff; margin-right: 7px; }
.match { font-size: 14.500px; }
.select { height: 31px; display: flex; align-items: center; border: 1px solid #a5a39f; border-radius: 5px; background: linear-gradient(#fff, #ededec); padding: 0 7px 0 4px; font-size: 14.700px; }
.select svg { width: 17px; height: 17px; }
.select span { margin-left: 5px; flex: 1; }

/* Document */
.workspace { height: 554px; flex: none; display: flex; }
.editor { width: 1332px; display: flex; flex-direction: column; }
.ruler { width: 1332px; height: 24px; flex: none; }
.rnum { font: 10.500px "Open Sans", sans-serif; fill: #8b8a86; text-anchor: middle; stroke: #fff; stroke-width: 3px; paint-order: stroke; }
.canvas { height: 530px; overflow: hidden; padding-left: 185px; }
.sheet { width: 954px; height: 560px; background: #fff; box-shadow: 0 0 5px rgba(0,0,0,.4); overflow: hidden; padding-left: 1px; }
h2 { margin: -9px 0 0 92px; font: bold 22.500px/28px "Liberation Sans", sans-serif; color: #000; white-space: nowrap; }
.figure { display: block; width: 780px; height: 120px; margin: 30px 0 0 83px; }
.ev circle { fill: #674500; stroke: #000; stroke-width: 2.300; }
.ev text { font: bold 19px "Liberation Serif", serif; fill: #fff; text-anchor: middle; }
.ev .hot circle { fill: #ed1c24; }
.ev .amber circle { fill: #c87e14; }
.note { font: bold 13px "Liberation Serif", serif; fill: #d21f26; }
.sub { font-size: 7px; }
.caption { margin: 2px 0 0 313px; font: italic 16px/20px "Liberation Serif", serif; letter-spacing: .03px; color: #000; }
.block { margin: 98px 0 0 45px; width: 843px; height: 165px; background: #f00; }

.splitter { width: 7px; border: 1px solid #b0aeaa; border-right-width: 1px; position: relative; height: 553px; }
.mark { position: absolute; left: -8px; top: 274px; width: 7px; height: 23px; background: #f28f68; }
.thumb { position: absolute; left: -1px; top: 239px; width: 7px; height: 73px; background: #93918b; }
.thumb::after { content: ""; position: absolute; left: 1px; top: 33px; border: 4px solid transparent; border-left: 5px solid #fff; border-right: 0; }
.sidebar { width: 40px; height: 553px; border: 1px solid #b0aeaa; border-width: 1px 0; display: flex; flex-direction: column; align-items: center; gap: 3px; }
.sm { width: 24px; height: 24px; margin: 7px 0 8px; flex: none; }
.tab { width: 32px; height: 32px; display: flex; align-items: center; justify-content: center; flex: none; }
.tab svg { width: 24px; height: 24px; }
.sel { border: 1px solid #bab8b4; border-radius: 4px; }

/* Status bar */
.status { height: 21px; flex: none; display: flex; align-items: center; border-top: 1px solid #b0aeaa; font-size: 11.900px; white-space: nowrap; }
.st { flex: none; height: 16px; line-height: 16px; border-right: 1px solid #918f8b; padding-left: 8px; display: flex; align-items: center; }
.first { padding-left: 10px; }
.mid { justify-content: center; padding: 0; }
.last { border: 0; padding-left: 6px; }
.st svg { width: 14px; height: 12px; }
.st .views { width: 58px; }
.st .zoom { width: 130px; height: 14px; }

/* Cell widths */
.w6 { width: 6px; } .w7 { width: 7px; } .w8 { width: 8px; } .w9 { width: 9px; } .w10 { width: 10px; }
.w29 { width: 29px; } .w32 { width: 32px; } .w33 { width: 33px; } .w34 { width: 34px; } .w36 { width: 36px; } .w37 { width: 37px; }
.w39 { width: 39px; } .w43 { width: 43px; } .w44 { width: 44px; } .w45 { width: 45px; } .w48 { width: 48px; }
.w51 { width: 51px; } .w52 { width: 52px; } .w62 { width: 62px; } .w67 { width: 67px; } .w68 { width: 68px; }
.w71 { width: 71px; } .w77 { width: 77px; } .w82 { width: 82px; } .w129 { width: 129px; }
.w141 { width: 141px; } .w142 { width: 142px; } .w143 { width: 143px; } .w146 { width: 146px; } .w148 { width: 148px; }
.w161 { width: 161px; } .w243 { width: 243px; } .w248 { width: 248px; } .w278 { width: 278px; }
.ml2 { margin-left: 2px; } .ml10 { margin-left: 10px; }
```
